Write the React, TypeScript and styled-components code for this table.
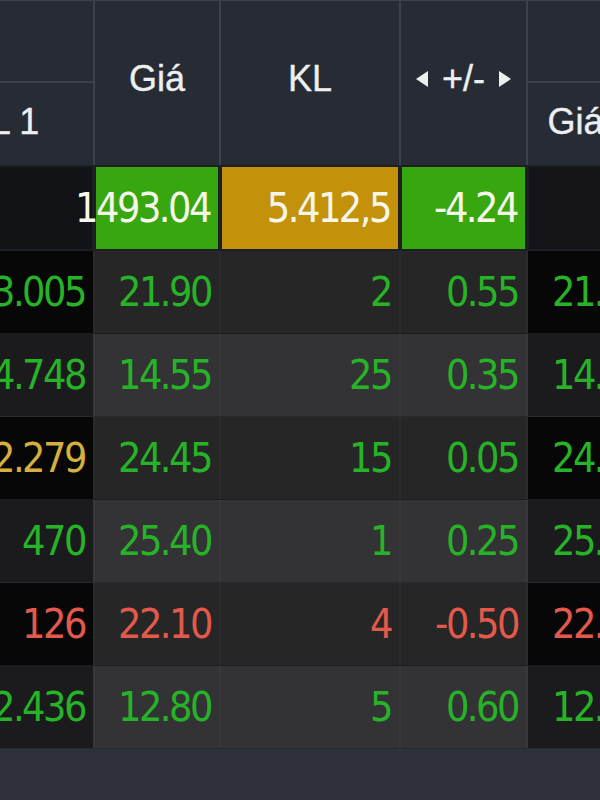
import React from 'react';
import styled, { createGlobalStyle, css } from 'styled-components';

const Global = createGlobalStyle`
  html, body { margin: 0; padding: 0; background: #2e3139; overflow: hidden; }
  #root { width: 600px; height: 800px; overflow: hidden; }
`;

const COLS = '180px 124px 178px 125px 125px';

type Tone = 'up' | 'down' | 'ref' | 'white';
const toneColor: Record<Tone, string> = {
  up: '#27b327',
  down: '#e3594c',
  ref: '#d6b03c',
  white: '#f6f6ea',
};

const Board = styled.div`
  margin-left: -87px;
  width: max-content;
  display: flex;
  flex-direction: column;
`;

const Header = styled.div`
  display: grid;
  grid-template-columns: ${COLS};
  grid-template-rows: 80px 82px;
  gap: 2px;
  background: #3c414b;
  padding-top: 1px;
`;

const HeadCell = styled.div<{ $tall?: boolean }>`
  background: #272b33;
  color: #eceef0;
  font-family: 'Liberation Sans', Arial, sans-serif;
  font-size: 36px;
  display: flex;
  align-items: center;
  justify-content: center;
  gap: 14px;
  white-space: nowrap;
  overflow: hidden;
  padding-bottom: 4px;
  box-sizing: border-box;
  -webkit-text-stroke: 0.4px #eceef0;
  ${(p) =>
    p.$tall &&
    css`
      grid-row: span 2;
      padding-bottom: 8px;
    `}
`;

const IndexRow = styled.div`
  display: grid;
  grid-template-columns: ${COLS};
  column-gap: 2px;
  background: #1c1f24;
  padding: 2px 0;
`;

const IndexCell = styled.div<{ $bg: string }>`
  height: 82px;
  background: ${(p) => p.$bg};
  margin: 0 1px;
  display: flex;
  align-items: center;
  justify-content: flex-end;
  padding-right: 8px;
  color: ${toneColor.white};
  font-family: 'DejaVu Sans', Verdana, sans-serif;
  font-stretch: condensed;
  font-size: 41px;
  letter-spacing: -2.5px;
  white-space: nowrap;
  box-sizing: border-box;
`;

const Row = styled.div<{ $even: boolean }>`
  display: grid;
  grid-template-columns: ${COLS};
  column-gap: 2px;
  height: 83px;
  box-sizing: border-box;
  border-bottom: 1px solid ${(p) => (p.$even ? '#2a2a2c' : '#1d1d1d')};
  background: ${(p) => (p.$even ? '#38383a' : '#2b2b2b')};
`;

const Cell = styled.div<{ $side?: boolean; $even: boolean; $tone: Tone }>`
  background: ${(p) =>
    p.$side ? (p.$even ? '#1b1b1e' : '#070707') : p.$even ? '#333335' : '#262626'};
  color: ${(p) => toneColor[p.$tone]};
  display: flex;
  align-items: center;
  justify-content: flex-end;
  padding-right: 8px;
  font-family: 'DejaVu Sans', Verdana, sans-serif;
  font-stretch: condensed;
  font-size: 41px;
  letter-spacing: -2.5px;
  white-space: nowrap;
  overflow: hidden;
  box-sizing: border-box;
`;

const Arrow = styled.svg`
  width: 12px;
  height: 16px;
  flex: none;
  fill: #eceef0;
`;

type RowData = {
  left: string;
  lt: Tone;
  price: string;
  kl: string;
  ch: string;
  t: Tone;
  right: string;
  rt: Tone;
};

const rows: RowData[] = [
  { left: '3.005', lt: 'up', price: '21.90', kl: '2', ch: '0.55', t: 'up', right: '21.95', rt: 'up' },
  { left: '4.748', lt: 'up', price: '14.55', kl: '25', ch: '0.35', t: 'up', right: '14.60', rt: 'up' },
  { left: '2.279', lt: 'ref', price: '24.45', kl: '15', ch: '0.05', t: 'up', right: '24.50', rt: 'up' },
  { left: '470', lt: 'up', price: '25.40', kl: '1', ch: '0.25', t: 'up', right: '25.45', rt: 'up' },
  { left: '126', lt: 'down', price: '22.10', kl: '4', ch: '-0.50', t: 'down', right: '22.15', rt: 'down' },
  { left: '2.436', lt: 'up', price: '12.80', kl: '5', ch: '0.60', t: 'up', right: '12.85', rt: 'up' },
];

export default function App() {
  return (
    <>
      <Global />
      <Board>
        <Header>
          <HeadCell />
          <HeadCell $tall>Giá</HeadCell>
          <HeadCell $tall>KL</HeadCell>
          <HeadCell $tall>
            <Arrow viewBox="0 0 12 16">
              <polygon points="0,8 12,0 12,16" />
            </Arrow>
            <span>+/-</span>
            <Arrow viewBox="0 0 12 16">
              <polygon points="0,0 12,8 0,16" />
            </Arrow>
          </HeadCell>
          <HeadCell />
          <HeadCell>KL 1</HeadCell>
          <HeadCell>Giá 1</HeadCell>
        </Header>
        <IndexRow>
          <IndexCell $bg="#121317" />
          <IndexCell $bg="#38a70f">1493.04</IndexCell>
          <IndexCell $bg="#c4920a">5.412,5</IndexCell>
          <IndexCell $bg="#38a70f">-4.24</IndexCell>
          <IndexCell $bg="#141418" />
        </IndexRow>
        {rows.map((r, i) => {
          const even = i % 2 === 1;
          return (
            <Row key={i} $even={even}>
              <Cell $side $even={even} $tone={r.lt}>{r.left}</Cell>
              <Cell $even={even} $tone={r.t}>{r.price}</Cell>
              <Cell $even={even} $tone={r.t}>{r.kl}</Cell>
              <Cell $even={even} $tone={r.t}>{r.ch}</Cell>
              <Cell $side $even={even} $tone={r.rt}>{r.right}</Cell>
            </Row>
          );
        })}
      </Board>
    </>
  );
}
